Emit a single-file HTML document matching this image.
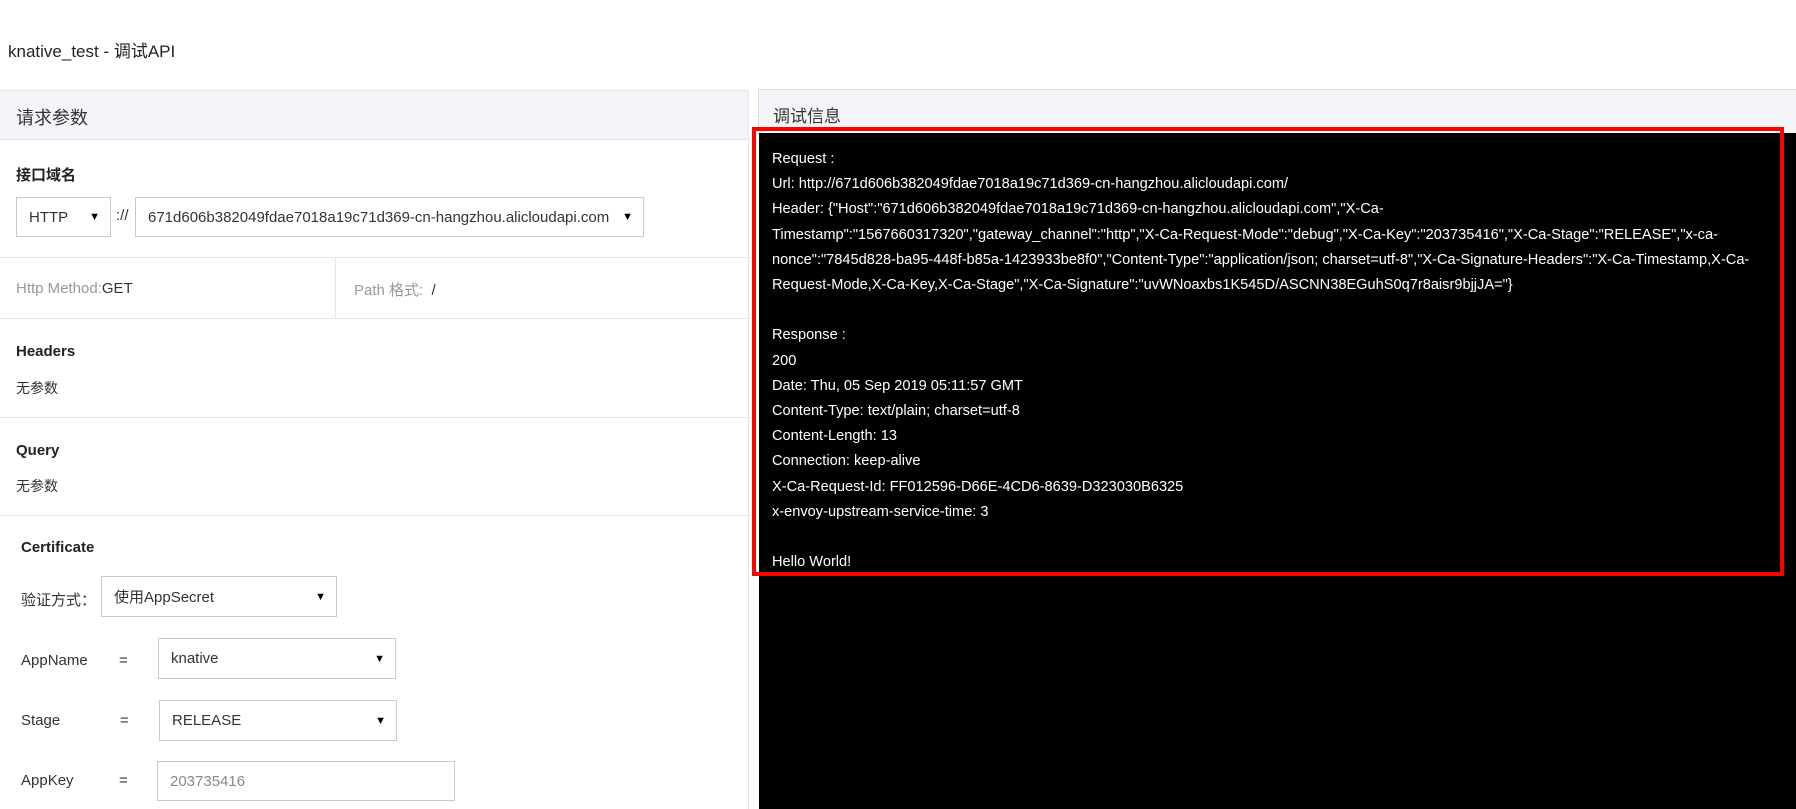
<!DOCTYPE html>
<html><head><meta charset="utf-8"><style>
*{margin:0;padding:0;box-sizing:border-box}
body{width:1796px;height:809px;overflow:hidden;background:#fff;font-family:"Liberation Sans","Noto Sans CJK SC",sans-serif;color:#333;position:relative}
.a{position:absolute;white-space:nowrap}
.hl{position:absolute;left:0;width:748px;height:1px;background:#e3e6eb}
.sel{position:absolute;border:1px solid #c9c9c9;background:#fff;font-size:15px;color:#333;padding-left:12px;display:flex;align-items:center}
.sel .arr{position:absolute;right:10px;font-size:11px;color:#000}
.lbl{font-size:15px;color:#333}
.b{font-weight:bold;font-size:15px;color:#222}
.pre{position:absolute;left:772px;top:147px;color:#fff;font-size:14.6px;line-height:25.2px;white-space:pre}
</style></head><body>
<div class="a" style="left:8px;top:37px;font-size:17px;color:#222">knative_test - 调试API</div>

<div style="position:absolute;left:0;top:90px;width:749px;height:719px;border-right:1px solid #e3e6eb"></div>
<div style="position:absolute;left:0;top:90px;width:748px;height:50px;background:#f3f4f7;border-top:1px solid #e3e6eb;border-bottom:1px solid #e3e6eb"></div>
<div class="a" style="left:16px;top:104px;font-size:18px;color:#333">请求参数</div>
<div class="a b" style="left:16px;top:164px">接口域名</div>
<div class="sel" style="left:16px;top:197px;width:95px;height:40px">HTTP<span class="arr">▼</span></div>
<div class="a" style="left:116px;top:207px;font-size:15px">://</div>
<div class="sel" style="left:135px;top:197px;width:509px;height:40px">671d606b382049fdae7018a19c71d369-cn-hangzhou.alicloudapi.com<span class="arr">▼</span></div>
<div class="hl" style="top:257px"></div>
<div style="position:absolute;left:335px;top:258px;width:1px;height:61px;background:#e3e6eb"></div>
<div class="a" style="left:16px;top:280px;font-size:15px;color:#999">Http Method:<span style="color:#333">GET</span></div>
<div class="a" style="left:354px;top:279px;font-size:15px;color:#999">Path 格式: &nbsp;<span style="color:#333">/</span></div>
<div class="hl" style="top:318px"></div>
<div class="a b" style="left:16px;top:343px">Headers</div>
<div class="a lbl" style="left:16px;top:378px;font-size:14px">无参数</div>
<div class="hl" style="top:417px"></div>
<div class="a b" style="left:16px;top:442px">Query</div>
<div class="a lbl" style="left:16px;top:476px;font-size:14px">无参数</div>
<div class="hl" style="top:515px"></div>
<div class="a b" style="left:21px;top:539px">Certificate</div>
<div class="a lbl" style="left:21px;top:589px">验证方式：</div>
<div class="sel" style="left:101px;top:576px;width:236px;height:41px">使用AppSecret<span class="arr">▼</span></div>
<div class="a lbl" style="left:21px;top:652px">AppName</div>
<div class="a lbl" style="left:119px;top:652px">=</div>
<div class="sel" style="left:158px;top:638px;width:238px;height:41px">knative<span class="arr">▼</span></div>
<div class="a lbl" style="left:21px;top:712px">Stage</div>
<div class="a lbl" style="left:120px;top:712px">=</div>
<div class="sel" style="left:159px;top:700px;width:238px;height:41px">RELEASE<span class="arr">▼</span></div>
<div class="a lbl" style="left:21px;top:772px">AppKey</div>
<div class="a lbl" style="left:119px;top:772px">=</div>
<div class="sel" style="left:157px;top:761px;width:298px;height:40px;color:#888">203735416</div>

<div style="position:absolute;left:758px;top:89px;width:1038px;height:45px;background:#f3f4f7;border-top:1px solid #dcdfe4;border-left:1px solid #dcdfe4"></div>
<div class="a" style="left:773px;top:102px;font-size:17px;color:#333">调试信息</div>
<div style="position:absolute;left:759px;top:133px;width:1037px;height:676px;background:#000"></div>
<div style="position:absolute;left:752px;top:127px;width:1032px;height:449px;border:4px solid #f00"></div>
<div class="pre">Request :
Url: http://671d606b382049fdae7018a19c71d369-cn-hangzhou.alicloudapi.com/
Header: {"Host":"671d606b382049fdae7018a19c71d369-cn-hangzhou.alicloudapi.com","X-Ca-
Timestamp":"1567660317320","gateway_channel":"http","X-Ca-Request-Mode":"debug","X-Ca-Key":"203735416","X-Ca-Stage":"RELEASE","x-ca-
nonce":"7845d828-ba95-448f-b85a-1423933be8f0","Content-Type":"application/json; charset=utf-8","X-Ca-Signature-Headers":"X-Ca-Timestamp,X-Ca-
Request-Mode,X-Ca-Key,X-Ca-Stage","X-Ca-Signature":"uvWNoaxbs1K545D/ASCNN38EGuhS0q7r8aisr9bjjJA="}

Response :
200
Date: Thu, 05 Sep 2019 05:11:57 GMT
Content-Type: text/plain; charset=utf-8
Content-Length: 13
Connection: keep-alive
X-Ca-Request-Id: FF012596-D66E-4CD6-8639-D323030B6325
x-envoy-upstream-service-time: 3

Hello World!</div>
</body></html>
